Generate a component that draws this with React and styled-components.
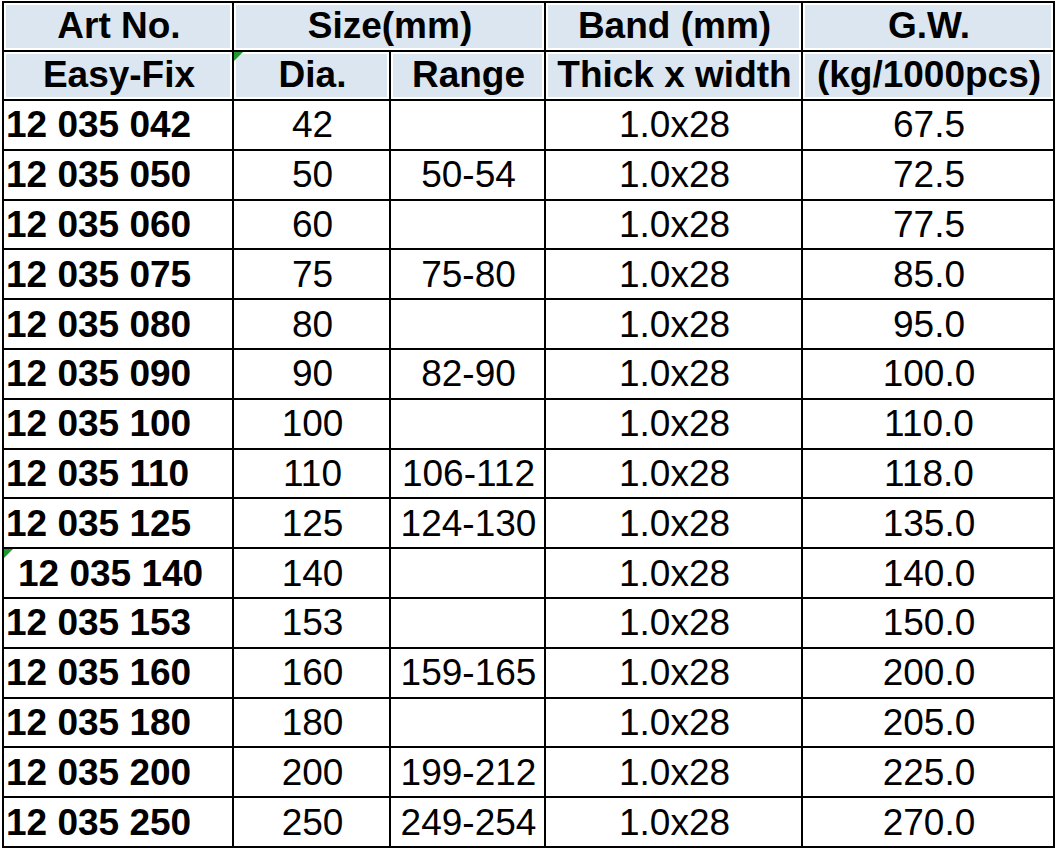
import React from 'react';
import styled, { createGlobalStyle, css } from 'styled-components';

const GlobalStyle = createGlobalStyle`
  html, body {
    margin: 0;
    padding: 0;
    background: #fff;
  }
  body {
    font-family: "Liberation Sans", Arial, sans-serif;
    color: #000;
  }
`;

const Page = styled.div`
  padding: 1px 0 0 2px;
`;

const Table = styled.div`
  display: grid;
  grid-template-columns: 228px 155px 153px 255px 250px;
  grid-template-rows: 47px 47px repeat(15, 47.8px);
  gap: 2px;
  padding: 2px;
  width: max-content;
  background: #000;
`;

const Cell = styled.div`
  position: relative;
  display: flex;
  align-items: center;
  justify-content: ${(p) => (p.$left ? 'flex-start' : 'center')};
  padding-left: ${(p) => (p.$indent ? '14px' : p.$left ? '2px' : '2px')};
  background: #fff;
  font-size: 37px;
  line-height: 1;
  font-weight: ${(p) => (p.$bold ? 700 : 400)};
  white-space: nowrap;
  overflow: hidden;
  ${(p) => p.$span && css`grid-column: span ${p.$span};`}
  ${(p) =>
    p.$flag &&
    css`
      &::before {
        content: '';
        position: absolute;
        top: 0;
        left: 0;
        border-top: 9px solid #1f9a2e;
        border-right: 9px solid transparent;
      }
    `}
`;

const HeadCell = styled(Cell)`
  background: #dce6f1;
  box-shadow: inset 0 0 0 2px #fff;
  font-weight: 700;
  padding-bottom: 3px;
`;

const rows = [
  ['12 035 042', '42', '', '67.5'],
  ['12 035 050', '50', '50-54', '72.5'],
  ['12 035 060', '60', '', '77.5'],
  ['12 035 075', '75', '75-80', '85.0'],
  ['12 035 080', '80', '', '95.0'],
  ['12 035 090', '90', '82-90', '100.0'],
  ['12 035 100', '100', '', '110.0'],
  ['12 035 110', '110', '106-112', '118.0'],
  ['12 035 125', '125', '124-130', '135.0'],
  ['12 035 140', '140', '', '140.0'],
  ['12 035 153', '153', '', '150.0'],
  ['12 035 160', '160', '159-165', '200.0'],
  ['12 035 180', '180', '', '205.0'],
  ['12 035 200', '200', '199-212', '225.0'],
  ['12 035 250', '250', '249-254', '270.0'],
];

export default function App() {
  return (
    <Page>
      <GlobalStyle />
      <Table>
        <HeadCell>Art No.</HeadCell>
        <HeadCell $span={2}>Size(mm)</HeadCell>
        <HeadCell>Band (mm)</HeadCell>
        <HeadCell>G.W.</HeadCell>

        <HeadCell>Easy-Fix</HeadCell>
        <HeadCell $flag>Dia.</HeadCell>
        <HeadCell>Range</HeadCell>
        <HeadCell>Thick x width</HeadCell>
        <HeadCell>(kg/1000pcs)</HeadCell>

        {rows.map(([art, dia, range, gw]) => {
          const odd = art === '12 035 140';
          return (
            <React.Fragment key={art}>
              <Cell $bold $left $indent={odd} $flag={odd}>{art}</Cell>
              <Cell>{dia}</Cell>
              <Cell>{range}</Cell>
              <Cell>1.0x28</Cell>
              <Cell>{gw}</Cell>
            </React.Fragment>
          );
        })}
      </Table>
    </Page>
  );
}
